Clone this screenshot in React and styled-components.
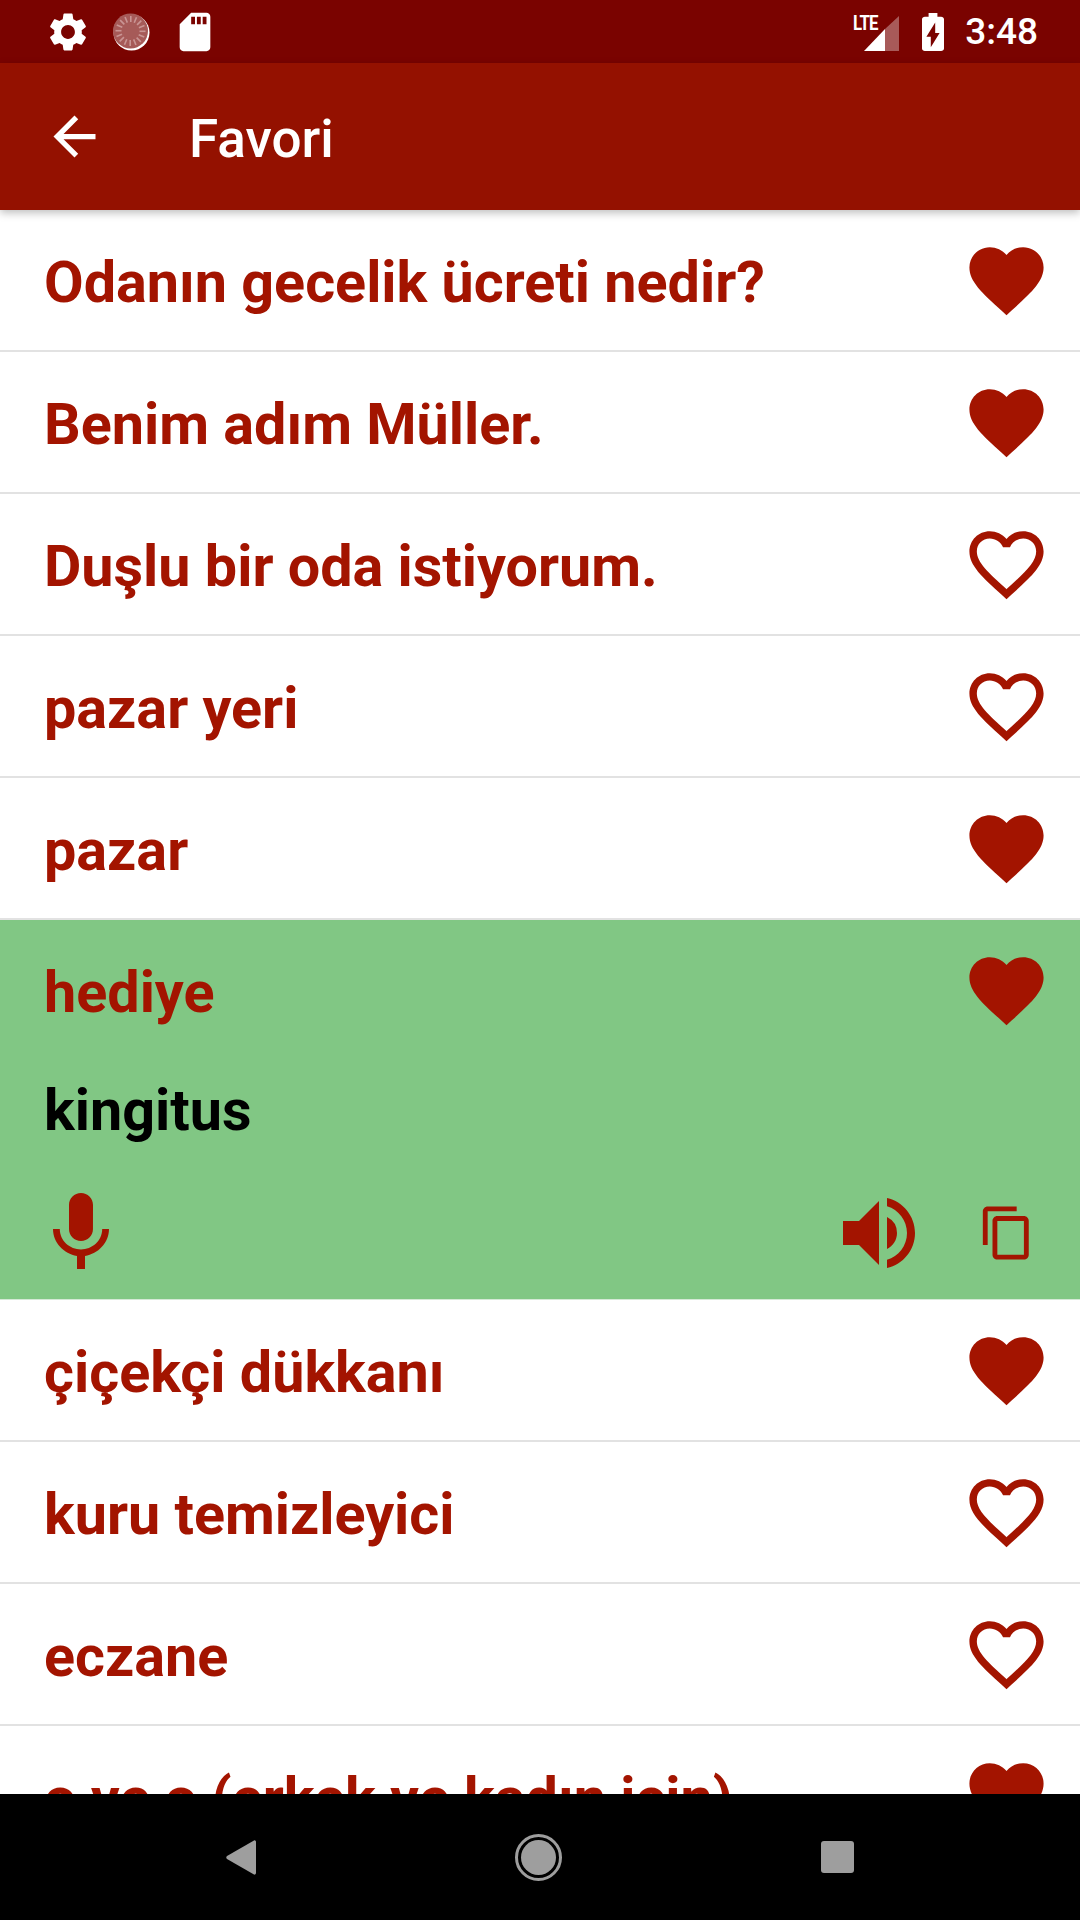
import React from 'react';
import styled, { createGlobalStyle } from 'styled-components';
import {
  MdArrowBack,
  MdContentCopy,
  MdFavorite,
  MdFavoriteBorder,
  MdMic,
  MdSdCard,
  MdSettings,
  MdVolumeUp,
} from 'react-icons/md';

const RED = '#a31400';

const GlobalStyle = createGlobalStyle`
  html, body {
    margin: 0;
    padding: 0;
    background: #fff;
  }
  body {
    font-family: Roboto, "Liberation Sans", sans-serif;
  }
`;

const Screen = styled.div`
  width: 1080px;
  height: 1920px;
  display: flex;
  flex-direction: column;
  overflow: hidden;
`;

/* status bar */

const StatusBar = styled.div`
  flex: 0 0 63px;
  display: flex;
  align-items: center;
  justify-content: space-between;
  padding: 0 42px 0 45px;
  background: #7a0300;
  color: #fff;
`;

const StatusGroup = styled.div`
  display: flex;
  align-items: center;
  gap: ${(p) => p.$gap}px;
`;

const Signal = styled.div`
  position: relative;
  width: 46px;
  height: 38px;
  margin-right: 2px;
  display: flex;
  justify-content: flex-end;
  align-items: flex-start;
  padding-top: 3px;
  box-sizing: border-box;
`;

const Lte = styled.span`
  position: absolute;
  left: 0;
  top: -2px;
  font-size: 21px;
  line-height: 24px;
  font-weight: 700;
  letter-spacing: -1px;
  transform: scaleX(0.8);
  transform-origin: left center;
`;

const Time = styled.span`
  font-size: 37px;
  line-height: 44px;
  font-weight: 500;
`;

/* toolbar */

const Toolbar = styled.header`
  position: relative;
  z-index: 2;
  flex: 0 0 147px;
  display: flex;
  align-items: center;
  padding-left: 43px;
  gap: 83px;
  background: #941100;
  box-shadow: 0 3px 8px rgba(0, 0, 0, 0.25);
  color: #fff;
`;

const Title = styled.h1`
  margin: 5px 0 0;
  font-size: 53px;
  line-height: 60px;
  font-weight: 500;
`;

/* list */

const List = styled.main`
  flex: 1;
  min-height: 0;
  overflow: hidden;
`;

const Row = styled.div`
  box-sizing: border-box;
  background: ${(p) => (p.$open ? '#81c784' : '#fff')};
  border-bottom: ${(p) => (p.$open ? '1px solid #d5e9d6' : '2px solid #e2e2e2')};
`;

const RowHead = styled.div`
  height: 140px;
  display: flex;
  align-items: center;
  justify-content: space-between;
  padding: 0 29px 0 44px;
`;

const Phrase = styled.span`
  margin-top: 5px;
  font-size: 57.5px;
  line-height: 70px;
  font-weight: 700;
  color: ${RED};
  white-space: nowrap;
`;

const Translation = styled.div`
  padding: 16px 44px 0;
  height: 112px;
  box-sizing: border-box;
  font-size: 57.5px;
  line-height: 70px;
  font-weight: 700;
  color: #000;
`;

const Actions = styled.div`
  display: flex;
  align-items: center;
  justify-content: space-between;
  height: 127px;
  padding: 0 44px 5px 33px;
  box-sizing: border-box;
  color: ${RED};
`;

const ActionGroup = styled.div`
  display: flex;
  align-items: center;
  gap: 51px;
`;

const Heart = styled.span`
  display: flex;
  color: ${RED};
`;

/* nav bar */

const NavBar = styled.nav`
  flex: 0 0 126px;
  display: flex;
  align-items: center;
  background: #000;
  padding: 0 226px;
  justify-content: space-between;
`;

const NavBack = styled.svg`
  width: 30px;
  height: 35px;
  fill: #9e9e9e;
`;

const NavHome = styled.div`
  box-sizing: border-box;
  width: 47px;
  height: 47px;
  border-radius: 50%;
  border: 3px solid #9e9e9e;
  display: flex;
  align-items: center;
  justify-content: center;

  &::after {
    content: '';
    width: 35px;
    height: 35px;
    border-radius: 50%;
    background: #9e9e9e;
  }
`;

const NavRecent = styled.div`
  width: 33px;
  height: 32px;
  border-radius: 3px;
  background: #9e9e9e;
`;

const phrases = [
  { text: 'Odanın gecelik ücreti nedir?', fav: true },
  { text: 'Benim adım Müller.', fav: true },
  { text: 'Duşlu bir oda istiyorum.', fav: false },
  { text: 'pazar yeri', fav: false },
  { text: 'pazar', fav: true },
  { text: 'hediye', fav: true, translation: 'kingitus' },
  { text: 'çiçekçi dükkanı', fav: true },
  { text: 'kuru temizleyici', fav: false },
  { text: 'eczane', fav: false },
  { text: 'o ve o (erkek ve kadın için)', fav: true },
];

const Spinner = () => {
  const ticks = Array.from({ length: 16 }, (_, i) => (i * 360) / 16);
  return (
    <svg width="37" height="38" viewBox="0 0 37 38">
      <circle cx="18.5" cy="19.5" r="18" fill="#fff" />
      <circle cx="17.5" cy="18" r="17.5" fill="#a65a58" />
      {ticks.map((a) => (
        <rect key={a} x="17" y="3" width="1.6" height="6" fill="#c99594" transform={`rotate(${a} 17.5 18)`} />
      ))}
    </svg>
  );
};

const SignalIcon = () => (
  <svg width="35" height="35" viewBox="0 0 35 35">
    <path d="M35 0V35H21V13Z" fill="#fff" fillOpacity="0.35" />
    <path d="M21 13V35H0Z" fill="#fff" />
  </svg>
);

const BatteryIcon = () => (
  <svg width="22" height="38" viewBox="7 2 10 20" preserveAspectRatio="none" fill="#fff">
    <path d="M15.67 4H14V2h-4v2H8.33C7.6 4 7 4.6 7 5.33v15.33C7 21.4 7.6 22 8.33 22h7.33c.74 0 1.34-.6 1.34-1.33V5.33C17 4.6 16.4 4 15.67 4zM11 20v-5.5H9L13 7v5.5h2L11 20z" />
  </svg>
);

const App = () => (
  <Screen>
    <GlobalStyle />
    <StatusBar>
      <StatusGroup $gap={22}>
        <MdSettings size={46} />
        <Spinner />
        <MdSdCard size={46} />
      </StatusGroup>
      <StatusGroup $gap={21}>
        <Signal>
          <Lte>LTE</Lte>
          <SignalIcon />
        </Signal>
        <BatteryIcon />
        <Time>3:48</Time>
      </StatusGroup>
    </StatusBar>

    <Toolbar>
      <MdArrowBack size={63} />
      <Title>Favori</Title>
    </Toolbar>

    <List>
      {phrases.map((item) => (
        <Row key={item.text} $open={!!item.translation}>
          <RowHead>
            <Phrase>{item.text}</Phrase>
            <Heart>{item.fav ? <MdFavorite size={89} /> : <MdFavoriteBorder size={89} />}</Heart>
          </RowHead>
          {item.translation && (
            <>
              <Translation>{item.translation}</Translation>
              <Actions>
                <MdMic size={96} />
                <ActionGroup>
                  <MdVolumeUp size={96} />
                  <MdContentCopy size={58} />
                </ActionGroup>
              </Actions>
            </>
          )}
        </Row>
      ))}
    </List>

    <NavBar>
      <NavBack viewBox="0 0 30 35">
        <path d="M28 0.5C29 0 30 1 30 2V33C30 34 29 35 28 34.5L1 19C0 18.4 0 16.6 1 16Z" />
      </NavBack>
      <NavHome />
      <NavRecent />
    </NavBar>
  </Screen>
);

export default App;
